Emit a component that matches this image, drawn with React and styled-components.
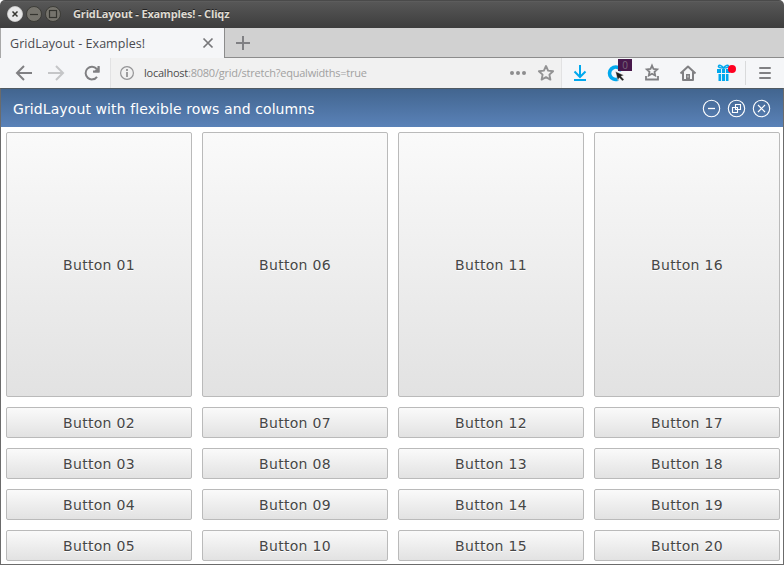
import React from 'react';
import styled, { createGlobalStyle } from 'styled-components';

const GlobalStyle = createGlobalStyle`
  * { box-sizing: border-box; }
  body { margin: 0; background: #fff; overflow: hidden; }
  svg { display: block; flex: none; overflow: visible; }
`;

const Window = styled.div`
  width: 784px;
  height: 565px;
  display: flex;
  flex-direction: column;
  background: #fff;
  font-family: "Open Sans", "Noto Sans", sans-serif;
`;

const TitleBar = styled.header`
  height: 28px;
  flex: none;
  display: flex;
  align-items: center;
  padding-left: 7px;
  background: linear-gradient(#4a4a4a 0, #4a4a4a 1px, #626262 1px, #575757 2px, #3d3d3d 100%);
  border-radius: 5px 5px 0 0;
`;

const WindowControls = styled.div`
  display: flex;
  gap: 3px;
  width: 66px;
`;

const WindowTitle = styled.div`
  color: #dfdbd2;
  font-size: 11px;
  line-height: 16px;
  font-weight: 700;
  letter-spacing: -0.16px;
  white-space: nowrap;
  text-shadow: 0 -1px #222;
`;

const TabBar = styled.div`
  height: 30px;
  flex: none;
  display: flex;
  background: #d1d1d1;
`;

const Tab = styled.div`
  width: 225px;
  display: flex;
  align-items: center;
  justify-content: space-between;
  padding: 0 10px 0 9px;
  background: #f5f6f8;
  border-left: 1px solid #a8a8a8;
  border-right: 1px solid #8c8c8c;
`;

const TabTitle = styled.span`
  padding-top: 1px;
  color: #4a4a4f;
  font-size: 12.5px;
  line-height: 18px;
  letter-spacing: 0.05px;
  white-space: nowrap;
`;

const TabStrip = styled.div`
  flex: 1;
  display: flex;
  align-items: center;
  padding-left: 9px;
  border-bottom: 1px solid #8c8c8c;
`;

const Toolbar = styled.nav`
  height: 30px;
  flex: none;
  display: flex;
  background: #f5f6f8;
`;

const NavButtons = styled.div`
  width: 110px;
  display: flex;
  align-items: center;
  padding-left: 14px;
`;

const Slot = styled.div`
  width: ${(p) => p.$width}px;
  height: 30px;
  flex: none;
  position: relative;
  display: flex;
  align-items: center;
`;

const AddressBar = styled.div`
  width: 452px;
  display: flex;
  align-items: center;
  padding-left: 7px;
  background: #f1f1f1;
  border-left: 1px solid #e2e2e3;
  border-right: 1px solid #e2e2e3;
`;

const Url = styled.div`
  width: 370px;
  padding-left: 6px;
  color: #a1a1a1;
  font-size: 11px;
  line-height: 16px;
  letter-spacing: -0.23px;
  white-space: nowrap;
`;

const Host = styled.span`
  color: #4c4c4c;
`;

const Extensions = styled.div`
  display: flex;
  align-items: center;
  padding-left: 8px;
`;

const CountBadge = styled.span`
  position: absolute;
  left: 12px;
  top: 1px;
  width: 14px;
  height: 12px;
  background: #47184b;
  color: #77677a;
  font-size: 10px;
  line-height: 12px;
  text-align: center;
`;

const Divider = styled.div`
  width: 1px;
  height: 24px;
  margin-right: 9px;
  background: #d9dadb;
`;

const Page = styled.main`
  flex: 1;
  display: flex;
  flex-direction: column;
  border: 1px solid #6b6b6b;
  border-top-color: #505a62;
`;

const Caption = styled.div`
  height: 38px;
  flex: none;
  display: flex;
  align-items: center;
  justify-content: space-between;
  padding: 0 12px;
  background: linear-gradient(#42658f, #5a82b8);
`;

const Heading = styled.h1`
  margin: 0;
  padding-top: 1px;
  color: #fff;
  font: 400 14px/20px "DejaVu Sans", sans-serif;
  letter-spacing: 0.1px;
  white-space: nowrap;
`;

const CaptionControls = styled.div`
  display: flex;
  gap: 6px;
`;

const Grid = styled.div`
  flex: 1;
  display: grid;
  grid-auto-flow: column;
  grid-template-columns: repeat(4, 186px);
  grid-template-rows: 265px repeat(4, 31px);
  gap: 10px;
  padding: 5px 5px 3px;
`;

const GridButton = styled.button`
  margin: 0;
  padding: 0;
  border: 1px solid #bababa;
  border-radius: 2px;
  background: linear-gradient(#fafafa, #e2e2e2);
  color: #464646;
  font: 400 14px/20px "DejaVu Sans", sans-serif;
  letter-spacing: 0.3px;
  text-shadow: 0 1px #fff;
`;

const Icon = ({ size = 20, color = '#808083', width = 2, children }) => (
  <svg width={size} height={size} viewBox={`0 0 ${size} ${size}`} fill="none" stroke={color} strokeWidth={width}>
    {children}
  </svg>
);

const OrbButton = ({ light, children }) => (
  <svg width="16" height="16" viewBox="0 0 16 16" fill="none">
    <circle cx="8" cy="8" r="7.5" fill={light ? '#e8e8e8' : '#76746d'} stroke={light ? '#d0d0cf' : '#34332f'} strokeWidth=".8" />
    <g stroke="#353530" strokeWidth="1.2">{children}</g>
  </svg>
);

const RoundControl = ({ children }) => (
  <svg width="19" height="19" viewBox="0 0 19 19" fill="none" stroke="#fff">
    <circle cx="9.5" cy="9.5" r="8.2" strokeWidth="1.1" />
    {children}
  </svg>
);

const labels = Array.from({ length: 20 }, (_, i) => `Button ${String(i + 1).padStart(2, '0')}`);

export default function App() {
  return (
    <>
      <GlobalStyle />
      <Window>
        <TitleBar>
          <WindowControls>
            <OrbButton light><path d="m5.5 5.5 5 5m0-5-5 5" strokeWidth="1.5" /></OrbButton>
            <OrbButton><path d="M4 8.5h8" /></OrbButton>
            <OrbButton><rect x="4.5" y="4.5" width="7" height="7" /></OrbButton>
          </WindowControls>
          <WindowTitle>GridLayout - Examples! - Cliqz</WindowTitle>
        </TitleBar>
        <TabBar>
          <Tab>
            <TabTitle>GridLayout - Examples!</TabTitle>
            <Icon size={12} color="#77777a" width={1.7}><path d="m1.5 1.5 9 9m0-9-9 9" /></Icon>
          </Tab>
          <TabStrip>
            <Icon size={18} width={2}><path d="M9 2v14M2 9h14" /></Icon>
          </TabStrip>
        </TabBar>
        <Toolbar>
          <NavButtons>
            <Slot $width={32}><Icon><path d="M18 10H3m7-7-7 7 7 7" /></Icon></Slot>
            <Slot $width={36}><Icon color="#c5c6c8"><path d="M2 10h15m-7-7 7 7-7 7" /></Icon></Slot>
            <Slot $width={20}>
              <Icon><path d="M15 13.8A6.3 6.3 0 1 1 14.7 6" /><path d="M17.5 3v6.500h-6.500z" fill="#808083" stroke="none" /><path d="M16.500 3v5.500H11" /></Icon>
            </Slot>
          </NavButtons>
          <AddressBar>
            <Slot $width={20}>
              <Icon size={18} color="#949496" width={1.2}>
                <circle cx="9" cy="9" r="6.4" /><path d="M9 8v5M9 5v2" strokeWidth="1.8" />
              </Icon>
            </Slot>
            <Url><Host>localhost</Host>:8080/grid/stretch?equalwidths=true</Url>
            <Slot $width={28}>
              <Icon color="none"><g fill="#8d8d8e" stroke="none"><circle cx="4" cy="10" r="2" /><circle cx="10" cy="10" r="2" /><circle cx="16" cy="10" r="2" /></g></Icon>
            </Slot>
            <Slot $width={20}>
              <Icon color="#929293" width={1.9}><path d="m10 3 2.100 4.600 5 .6-3.700 3.400 1 5-4.400-2.500-4.400 2.500 1-5L2.900 8.200l5-.6z" strokeLinejoin="round" /></Icon>
            </Slot>
          </AddressBar>
          <Extensions>
            <Slot $width={36}>
              <Icon color="#00a8ee"><path d="M10 2v12M4.500 8.500 10 14l5.500-5.500M4 17h12" /></Icon>
            </Slot>
            <Slot $width={36}>
              <Icon color="#00a8ee" width={3.6}>
                <path d="M12 16A6.200 6.200 0 1 1 15.500 8" />
                <path d="m9.500 8.500 8.500 3.800-3 1 3 3.300-1.500 1.500-3.200-3.300-1.500 2.700z" fill="#202020" stroke="#fff" strokeWidth=".4" />
              </Icon>
              <CountBadge>0</CountBadge>
            </Slot>
            <Slot $width={36}>
              <Icon width={1.8}>
                <path d="m10 2.600 1.500 3.400 3.700.4-2.700 2.500.7 3.600-3.200-1.800-3.200 1.800.7-3.600-2.700-2.500 3.700-.4z" />
                <path d="M4 13v3.500h12V13" />
              </Icon>
            </Slot>
            <Slot $width={36}>
              <Icon>
                <path d="m2.500 10.500 7.500-7 7.500 7M5 9v8h10V9" strokeLinejoin="round" />
                <path d="M8 17v-6h4v6z" fill="#808083" stroke="none" /><path d="M10 12.500v2" stroke="#ddd" strokeWidth="1" />
              </Icon>
            </Slot>
            <Slot $width={31}>
              <Icon color="#00a8ee" width={1.500}>
                <path d="M9.500 5C5 5 4 4 4.500 3s3-1 5 2c2-3 4.500-3 5-2s-1 2-5 2" />
                <path d="M3 6h13v4H3zM4.500 11h10v7h-10z" fill="#00a8ee" stroke="none" />
                <path d="M7.500 6v12M11.500 6v12" stroke="#f5f6f8" strokeWidth=".9" />
                <circle cx="18" cy="6" r="4" fill="#ff0020" stroke="none" />
              </Icon>
            </Slot>
            <Divider />
            <Slot $width={20}><Icon><path d="M5 5h10M5 10h10M5 15h10" strokeLinecap="round" /></Icon></Slot>
          </Extensions>
        </Toolbar>
        <Page>
          <Caption>
            <Heading>GridLayout with flexible rows and columns</Heading>
            <CaptionControls>
              <RoundControl><path d="M6 9.500h7" strokeWidth="1.300" /></RoundControl>
              <RoundControl><path d="M8.500 5.500h5v5h-5zM5.500 8.500h5v5h-5z" strokeWidth="1.100" /></RoundControl>
              <RoundControl><path d="m6 6 7 7m0-7-7 7" strokeWidth="1.200" /></RoundControl>
            </CaptionControls>
          </Caption>
          <Grid>
            {labels.map((label) => <GridButton key={label}>{label}</GridButton>)}
          </Grid>
        </Page>
      </Window>
    </>
  );
}
